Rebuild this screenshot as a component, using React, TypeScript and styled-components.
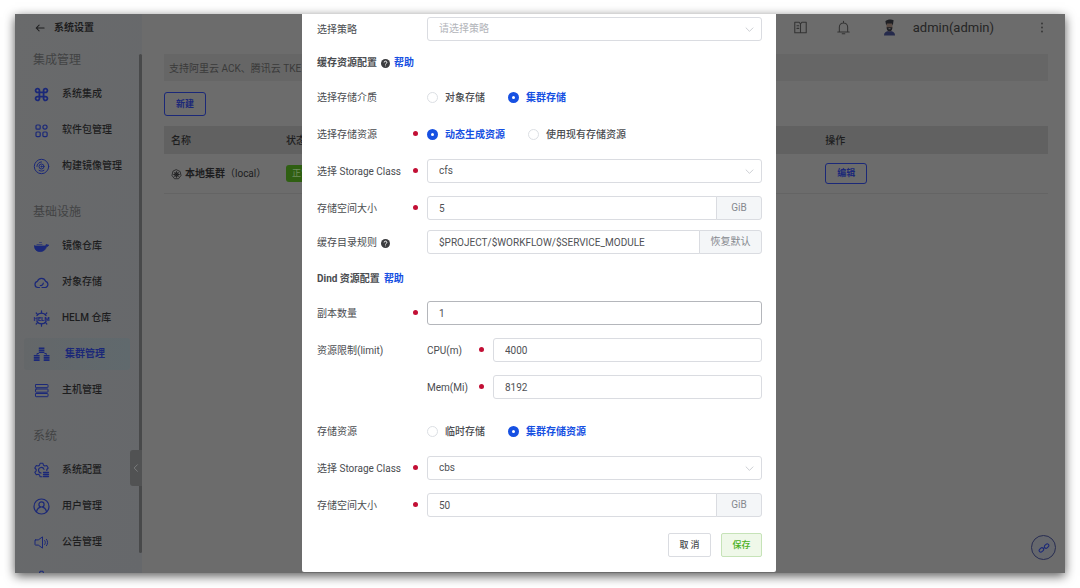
import React from 'react';
import styled, { createGlobalStyle, css } from 'styled-components';

const blue = '#1650e2';
const dimBlue = '#1b2878';

const GlobalStyle = createGlobalStyle`
  *, *::before, *::after { box-sizing: border-box; }
  body {
    margin: 0;
    background: #fff;
    color: #4a4c50;
    font: 10px/16px Roboto, "Noto Sans CJK SC", sans-serif;
  }
  button, input, select { font: inherit; color: inherit; margin: 0; }
  h1, h2, h3, p, ul { margin: 0; padding: 0; }
  ul { list-style: none; }
  svg { display: block; flex: none; }
`;

const Page = styled.div`
  padding: 14px 15px 15px;
`;

const Frame = styled.div`
  display: grid;
  grid-template-columns: minmax(0, 1fr);
  min-height: calc(100vh - 29px);
  background: #6c6c6c;
  box-shadow: 0 3px 10px rgba(0, 0, 0, 0.65);
`;

const Shell = styled.div`
  grid-area: 1 / 1;
  contain: size;
  position: relative;
  display: flex;
  overflow: hidden;
  color: #1d1d1e;
`;

/* ---------- sidebar ---------- */

const Sidebar = styled.aside`
  position: relative;
  flex: none;
  width: 127px;
  background: linear-gradient(100deg, #696a6b, #66686b);
`;

const Back = styled.a`
  display: flex;
  align-items: center;
  gap: 9px;
  height: 28px;
  padding-left: 20px;
  color: #1d1d1e;
  font-weight: 700;
  text-decoration: none;
`;

const Group = styled.section`
  & + & { margin-top: 10px; }
`;

const GroupTitle = styled.h2`
  padding: 8px 18px 6px;
  color: #424344;
  font-size: 12px;
  line-height: 20px;
  font-weight: 400;
`;

const NavLink = styled.a<{ $active?: boolean }>`
  display: flex;
  align-items: center;
  gap: 12px;
  height: 36px;
  padding-left: 18px;
  color: #1d1d1e;
  font-weight: 500;
  text-decoration: none;
  svg { color: ${dimBlue}; }
  ${(p) =>
    p.$active &&
    css`
      height: 32px;
      margin: 2px 12px 2px 9px;
      padding-left: 9px;
      gap: 15px;
      color: ${dimBlue};
      font-weight: 700;
      border-radius: 3px;
      background: linear-gradient(90deg, #646769, #60696d);
    `}
`;

const ScrollThumb = styled.div`
  position: absolute;
  top: 40px;
  right: 0;
  bottom: 20px;
  width: 3px;
  border-radius: 2px;
  background: #48494a;
`;

const Collapse = styled.button`
  position: absolute;
  top: 436px;
  right: 0;
  display: flex;
  align-items: center;
  justify-content: center;
  width: 12px;
  height: 36px;
  padding: 0;
  border: 0;
  border-radius: 3px 0 0 3px;
  background: #515253;
  color: #7c7d7e;
`;

/* ---------- main column ---------- */

const Main = styled.main`
  flex: 1;
  min-width: 0;
  padding: 0 17px 0 22px;
`;

const TopBar = styled.header`
  display: flex;
  align-items: center;
  justify-content: flex-end;
  height: 27px;
  margin-bottom: 13px;
`;

const Tools = styled.div`
  display: flex;
  gap: 28px;
  margin-right: 32px;
`;

const IconButton = styled.button`
  padding: 0;
  border: 0;
  background: none;
  color: #333;
`;

const UserName = styled.span`
  margin: 0 46px 0 17px;
  font-size: 13px;
  color: #252525;
`;

const MoreButton = styled(IconButton)`
  margin-right: 4px;
`;

const Notice = styled.p`
  height: 27px;
  margin-bottom: 11px;
  padding-left: 5px;
  overflow: hidden;
  background: #666;
  color: #3a3a3a;
  line-height: 30px;
`;

const OutlineButton = styled.button<{ $tall?: boolean }>`
  display: block;
  width: 42px;
  height: ${(p) => (p.$tall ? 24 : 21)}px;
  padding: 0;
  border: 1px solid ${dimBlue};
  border-radius: 3px;
  background: transparent;
  color: ${dimBlue};
  font-size: 9px;
  line-height: 12px;
  font-weight: 700;
`;

const Table = styled.table`
  width: 100%;
  margin-top: 10px;
  border-collapse: collapse;
  table-layout: fixed;
  text-align: left;
  th {
    height: 28px;
    padding: 2px 7px 0;
    background: #616161;
    font-weight: 500;
  }
  th:first-child { width: 13%; }
  th:nth-child(2) { width: 61%; }
  td {
    height: 39px;
    padding: 0 7px;
    border-bottom: 1px solid #646464;
  }
`;

const ClusterName = styled.span`
  display: flex;
  align-items: center;
  gap: 3px;
  padding-top: 2px;
  font-weight: 700;
  white-space: nowrap;
`;

const Latin = styled.span`
  font-weight: 400;
`;

const StatusTag = styled.span`
  display: inline-block;
  padding: 0 6px;
  border-radius: 3px;
  background: #2f5f12;
  color: #6f8d5e;
  font-size: 9px;
  line-height: 17px;
`;

const FloatLink = styled.a`
  position: absolute;
  right: 9px;
  bottom: 13px;
  display: flex;
  align-items: center;
  justify-content: center;
  width: 25px;
  height: 25px;
  border: 1px solid #282d52;
  border-radius: 50%;
  background: #66686d;
  color: ${dimBlue};
`;

/* ---------- dialog ---------- */

const Layer = styled.div`
  grid-area: 1 / 1;
  position: relative;
  display: flex;
  justify-content: center;
  padding: 0 2px 1px 0;
  pointer-events: none;
`;

const Dialog = styled.form`
  width: 474px;
  max-width: 100%;
  padding: 3px 14px 15px 15px;
  border-radius: 0 0 2px 2px;
  background: #fff;
  pointer-events: auto;
`;

const Row = styled.div<{ $gap?: number; $label?: number }>`
  display: grid;
  grid-template-columns: ${(p) => p.$label ?? 110}px minmax(0, 1fr);
  align-items: center;
  min-height: 24px;
  margin-top: ${(p) => p.$gap ?? 13}px;
`;

const TopRow = styled(Row)`
  align-items: start;
`;

const Label = styled.label<{ $required?: boolean }>`
  display: flex;
  align-items: center;
  gap: 4px;
  padding-top: 2px;
  line-height: 22px;
  white-space: nowrap;
  ${(p) =>
    p.$required &&
    css`
      &::after {
        content: '';
        width: 5px;
        height: 5px;
        margin: 0 9px 4px auto;
        border-radius: 50%;
        background: #c20f35;
      }
    `}
`;

const Heading = styled.h3<{ $gap: number }>`
  display: flex;
  align-items: center;
  gap: 4px;
  height: 22px;
  margin-top: ${(p) => p.$gap}px;
  padding-top: 2px;
  font-size: 10px;
  line-height: 16px;
  font-weight: 700;
  a { color: ${blue}; text-decoration: none; }
`;

const control = css`
  display: block;
  width: 100%;
  height: 24px;
  padding: 0 11px;
  border: 1px solid #dadce1;
  border-radius: 3px;
  outline: 0;
  background: #fff;
  color: #4f5155;
`;

const Input = styled.input<{ $hover?: boolean }>`
  ${control}
  ${(p) => p.$hover && css`border-color: #b4b6bb;`}
`;

const SelectBox = styled.div`
  display: grid;
  align-items: center;
  svg {
    grid-area: 1 / 1;
    justify-self: end;
    margin-right: 8px;
    color: #c0c3c9;
    pointer-events: none;
  }
`;

const Select = styled.select<{ $empty?: boolean }>`
  ${control}
  grid-area: 1 / 1;
  appearance: none;
  ${(p) => p.$empty && css`color: #b3b5ba;`}
`;

const Joined = styled.div`
  display: flex;
  ${Input} { flex: 1; min-width: 0; border-radius: 3px 0 0 3px; }
`;

const addon = css`
  flex: none;
  height: 24px;
  margin-left: -1px;
  padding: 0;
  border: 1px solid #dadce1;
  border-radius: 0 3px 3px 0;
  background: #f4f6f8;
  color: #85888e;
  text-align: center;
`;

const Unit = styled.span`
  ${addon}
  width: 46px;
  line-height: 22px;
`;

const ResetButton = styled.button`
  ${addon}
  width: 63px;
`;

const Radios = styled.div`
  display: flex;
  gap: 23px;
`;

const RadioLabel = styled.label`
  display: flex;
  align-items: center;
  gap: 7px;
  padding-top: 2px;
  font-weight: 500;
  &:has(input:checked) { color: ${blue}; font-weight: 700; }
`;

const RadioInput = styled.input`
  appearance: none;
  width: 11px;
  height: 11px;
  border: 1px solid #dcdfe4;
  border-radius: 50%;
  background: #fff;
  ${RadioLabel} & { margin: 0 0 2px; }
  &:checked { border: 4px solid ${blue}; }
`;

const Footer = styled.footer`
  display: flex;
  justify-content: flex-end;
  gap: 10px;
  margin-top: 16px;
`;

const ActionButton = styled.button<{ $primary?: boolean }>`
  width: ${(p) => (p.$primary ? 41 : 43)}px;
  height: 24px;
  padding: 0;
  border: 1px solid ${(p) => (p.$primary ? '#c6e3b8' : '#dadce1')};
  border-radius: 2px;
  background: ${(p) => (p.$primary ? '#eff8e9' : '#fff')};
  color: ${(p) => (p.$primary ? '#4db11f' : '#4a4c50')};
  font-size: 9px;
  line-height: 12px;
  font-weight: 500;
`;

/* ---------- icons ---------- */

const Svg = ({ size = 17, w = 1.2, children }: { size?: number; w?: number; children: React.ReactNode }) => (
  <svg width={size} height={size} viewBox="0 0 17 17" fill="none" stroke="currentColor" strokeWidth={w} strokeLinecap="round" strokeLinejoin="round" aria-hidden="true">
    {children}
  </svg>
);

const CommandIcon = () => (
  <Svg w={1.8}>
    <path d="M6.4 6.4V4.6a1.9 1.9 0 1 0-1.9 1.8h8a1.9 1.9 0 1 0-1.9-1.8v7.8a1.9 1.9 0 1 0 1.9-1.8h-8a1.9 1.9 0 1 0 1.9 1.8z" />
  </Svg>
);
const PackageIcon = () => (
  <Svg>
    <rect x="3" y="3" width="4.2" height="4.2" rx="1" />
    <circle cx="12" cy="5.1" r="2.1" />
    <rect x="3" y="10" width="4.2" height="4.6" rx="1" />
    <rect x="9.9" y="10" width="4.2" height="4.6" rx="1" />
  </Svg>
);
const DiscIcon = () => (
  <Svg w={1}>
    <circle cx="8.5" cy="8.5" r="7.2" />
    <path d="M3.9 8.5a4.6 4.6 0 0 1 4.6-4.6M6 12.400c1.500.9 3.500.9 5 0" />
    <circle cx="8.500" cy="8.500" r="2.500" />
    <circle cx="8.500" cy="8.500" r="0.600" />
  </Svg>
);
const WhaleIcon = () => (
  <Svg w={0.8}>
    <path d="M1.5 8h10.3c.8 0 1.2-.6 1.3-1.5.9.2 1.6.6 2.6.5-.3 1-1.2 1.5-2.2 1.6-.8 3-3 5-6.4 5C3.700 13.600 1.500 11.600 1.500 8z" fill="currentColor" />
    <path d="M4 6.500h5M6.500 4.500h2" strokeWidth="1" opacity="0.6" />
  </Svg>
);
const CloudIcon = () => (
  <Svg>
    <path d="M6.500 13.500H4.800A3.100 3.100 0 0 1 4.400 7.400 4.300 4.300 0 0 1 12.600 7.300 3.200 3.200 0 0 1 12.400 13.500H9M7.300 11.500c1.700.2 2.700-.8 3-2.300" />
  </Svg>
);
const HelmIcon = () => (
  <Svg w={1.2}>
    <path d="M3.900 5.600a5.400 5.400 0 0 1 9.200 0M3.900 11.400a5.400 5.400 0 0 0 9.200 0" />
    <path d="M8.500 3V.8M4.700 4.600L3.200 3M12.300 4.600L13.800 3M8.500 14v2.200M4.700 12.400L3.200 14M12.300 12.400l1.500 1.600" />
    <text x="8.500" y="10.600" fill="currentColor" stroke="none" fontSize="6" fontWeight="900" textAnchor="middle">HELM</text>
  </Svg>
);
const ClusterIcon = () => (
  <Svg>
    <path
      d="M5.800 1.500h5.600v1.600H5.800zM5.800 3.600h5.600v1.600H5.800zM5.800 5.700h5.600v1.300H5.800zM.8 9h5.800v1.600H.8zM.8 11.100h5.800v1.600H.8zM.8 13.200h5.800v1.800H.8zM10.700 9h5.800v1.600h-5.800zM10.700 11.100h5.800v1.600h-5.800zM10.700 13.200h5.800v1.800h-5.800z"
      fill="currentColor"
      stroke="none"
    />
    <path d="M4 8.500v-1h1.500M13.300 8.500v-1h-1.500" strokeWidth="1" />
  </Svg>
);
const ServerIcon = () => (
  <Svg w={1}>
    <rect x="2.500" y="2.500" width="12.500" height="3.200" rx="0.600" />
    <rect x="2.500" y="7" width="12.500" height="3.200" rx="0.600" />
    <rect x="2.500" y="11.500" width="12.500" height="3.200" rx="0.600" />
  </Svg>
);
const GearIcon = () => (
  <Svg w={1.1}>
    <path d="M9 14.800H7.100l-.6-1.900-1.300-.7-1.900.5-1.500-2.400 1.400-1.500V7.500L1.800 6l1.500-2.500 1.900.5 1.300-.8.600-1.900h2.800l.6 1.900 1.300.8 1.900-.5L15.200 6l-1.400 1.500v1" />
    <path d="M11 7.400A2.800 2.800 0 1 0 8.200 11" />
    <path d="M10.500 10.500h5M10.500 12.500h5M10.500 14.500h5" strokeWidth="1.300" />
  </Svg>
);
const UserIcon = () => (
  <Svg>
    <circle cx="8.500" cy="8.500" r="7.500" />
    <circle cx="8.500" cy="6.400" r="2.600" />
    <path d="M3.500 13.600c.6-2.800 2.300-4 3.700-4.500M13.500 13.600c-.6-2.800-2.300-4-3.700-4.500" />
  </Svg>
);
const SpeakerIcon = () => (
  <Svg w={1}>
    <path d="M2.500 5.900h2.800l4.200-3v11.200l-4.200-3H2.500a.5.500 0 0 1-.5-.5V6.400a.5.500 0 0 1 .5-.5zM11.700 6.500c.9 1.200.9 2.800 0 4M13.500 5.300c1.500 2 1.500 4.400 0 6.400" />
  </Svg>
);
const ArrowLeft = () => (
  <Svg size={10} w={1.700}>
    <path d="M15.500 8.500H2M7 3.500l-5 5 5 5" />
  </Svg>
);
const Chevron = () => (
  <Svg size={9} w={1.500}>
    <path d="M2 5.500l6.500 6.500 6.500-6.500" />
  </Svg>
);
const ChevronLeft = () => (
  <Svg size={8} w={2}>
    <path d="M11.500 1.500l-7 7 7 7" />
  </Svg>
);
const BookIcon = () => (
  <Svg size={15} w={1.200}>
    <path d="M8.500 4.500v10H2v-12h5l1.500 2M8.500 4.500l1.500-2h5v12H8.500M4.500 6.500h2M4.500 9.500h2" />
  </Svg>
);
const BellIcon = () => (
  <Svg size={15} w={1.200}>
    <path d="M2 13.500h13M3.800 13.500V8a4.700 4.700 0 0 1 9.400 0v5.500M8.500 3.300V1.500M7 15.500h3" />
  </Svg>
);
const AvatarIcon = () => (
  <svg width="13" height="17" viewBox="0 0 13 17" aria-hidden="true">
    <path d="M1 16.500c0-3 1.800-4.500 5.500-4.500s5.500 1.500 5.500 4.500z" fill="#252a4c" />
    <path d="M3.600 4h5.800v4.500c0 2.300-1.200 4-2.900 4s-2.900-1.700-2.900-4z" fill="#5a4c45" />
    <path d="M3.200 6.500L2.400 2.200C4 .4 8.500.2 10.600 1.200l-.8 5.300-.9-2H4zM3.700 8.300h5.600c0 2.500-1 4-2.800 4s-2.800-1.500-2.800-4z" fill="#1e1f24" />
    <path d="M5.500 9.700h2" stroke="#777" strokeWidth="0.800" />
  </svg>
);
const DotsIcon = () => (
  <svg width="4" height="11" viewBox="0 0 4 11" fill="currentColor" aria-hidden="true">
    <circle cx="2" cy="1.500" r="0.900" />
    <circle cx="2" cy="5.500" r="0.900" />
    <circle cx="2" cy="9.500" r="0.900" />
  </svg>
);
const KubeIcon = () => (
  <Svg size={11} w={1.200}>
    <path d="M8.500 1.200l5.600 2.700 1.400 6.100-3.900 5H5.400l-3.900-5 1.400-6.100z" />
    <circle cx="8.500" cy="8.500" r="3" />
    <path d="M8.500 4v9M4 8.500h9M5.500 5.500l6 6M11.500 5.500l-6 6" />
  </Svg>
);
const LinkIcon = () => (
  <Svg size={12} w={1.500}>
    <rect x="1.300" y="9" width="7" height="4.600" rx="2.300" transform="rotate(-45 4.800 11.300)" />
    <rect x="8.700" y="3.400" width="7" height="4.600" rx="2.300" transform="rotate(-45 12.200 5.700)" />
    <path d="M7.500 9.500l2-2" />
  </Svg>
);
const HelpIcon = () => (
  <svg width="9" height="9" viewBox="0 0 18 18" role="img" aria-label="说明">
    <circle cx="9" cy="9" r="9" fill="#3c3d40" />
    <path d="M6.300 7a2.700 2.700 0 1 1 4 2.300c-.9.500-1.300.9-1.300 1.900M9 13.200v1.300" fill="none" stroke="#fff" strokeWidth="1.800" />
  </svg>
);

/* ---------- data ---------- */

const groups = [
  {
    title: '集成管理',
    items: [
      { text: '系统集成', icon: <CommandIcon /> },
      { text: '软件包管理', icon: <PackageIcon /> },
      { text: '构建镜像管理', icon: <DiscIcon /> },
    ],
  },
  {
    title: '基础设施',
    items: [
      { text: '镜像仓库', icon: <WhaleIcon /> },
      { text: '对象存储', icon: <CloudIcon /> },
      { text: 'HELM 仓库', icon: <HelmIcon /> },
      { text: '集群管理', icon: <ClusterIcon />, active: true },
      { text: '主机管理', icon: <ServerIcon /> },
    ],
  },
  {
    title: '系统',
    items: [
      { text: '系统配置', icon: <GearIcon /> },
      { text: '用户管理', icon: <UserIcon /> },
      { text: '公告管理', icon: <SpeakerIcon /> },
      { text: '', icon: <GearIcon /> },
    ],
  },
];

/* ---------- form parts ---------- */

const SelectField = ({ id, value, empty }: { id: string; value: string; empty?: boolean }) => (
  <SelectBox>
    <Select id={id} $empty={empty}>
      <option>{value}</option>
    </Select>
    <Chevron />
  </SelectBox>
);

const RadioField = ({ name, options, checked }: { name: string; options: string[]; checked: number }) => (
  <Radios role="radiogroup">
    {options.map((o, i) => (
      <RadioLabel key={o}>
        <RadioInput type="radio" name={name} defaultChecked={i === checked} />
        {o}
      </RadioLabel>
    ))}
  </Radios>
);

const SizeField = ({ id, value }: { id: string; value: string }) => (
  <Joined>
    <Input id={id} defaultValue={value} />
    <Unit>GiB</Unit>
  </Joined>
);

export default function App() {
  return (
    <Page>
      <GlobalStyle />
      <Frame>
        <Shell>
          <Sidebar>
            <Back href="#back">
              <ArrowLeft />
              系统设置
            </Back>
            <nav>
              {groups.map((g) => (
                <Group key={g.title}>
                  <GroupTitle>{g.title}</GroupTitle>
                  {g.items.map((it) => (
                    <NavLink key={it.text} href="#nav" $active={'active' in it}>
                      {it.icon}
                      {it.text}
                    </NavLink>
                  ))}
                </Group>
              ))}
            </nav>
            <ScrollThumb />
            <Collapse type="button" aria-label="收起">
              <ChevronLeft />
            </Collapse>
          </Sidebar>
          <Main>
            <TopBar>
              <Tools>
                <IconButton type="button" aria-label="文档"><BookIcon /></IconButton>
                <IconButton type="button" aria-label="通知"><BellIcon /></IconButton>
              </Tools>
              <AvatarIcon />
              <UserName>admin(admin)</UserName>
              <MoreButton type="button" aria-label="更多"><DotsIcon /></MoreButton>
            </TopBar>
            <Notice>支持阿里云 ACK、腾讯云 TKE</Notice>
            <OutlineButton type="button" $tall>新建</OutlineButton>
            <Table>
              <thead>
                <tr>
                  <th>名称</th>
                  <th>状态</th>
                  <th>操作</th>
                </tr>
              </thead>
              <tbody>
                <tr>
                  <td>
                    <ClusterName>
                      <KubeIcon />
                      <span>本地集群<Latin>（local）</Latin></span>
                    </ClusterName>
                  </td>
                  <td><StatusTag>正常</StatusTag></td>
                  <td><OutlineButton type="button">编辑</OutlineButton></td>
                </tr>
              </tbody>
            </Table>
          </Main>
          <FloatLink href="#link" aria-label="链接"><LinkIcon /></FloatLink>
        </Shell>

        <Layer>
          <Dialog role="dialog" onSubmit={(e) => e.preventDefault()}>
            <Row $gap={0}>
              <Label htmlFor="strategy">选择策略</Label>
              <SelectField id="strategy" value="请选择策略" empty />
            </Row>

            <Heading $gap={10}>
              缓存资源配置 <HelpIcon /> <a href="#help">帮助</a>
            </Heading>
            <Row $gap={12}>
              <Label as="span">选择存储介质</Label>
              <RadioField name="medium" options={['对象存储', '集群存储']} checked={1} />
            </Row>
            <Row>
              <Label as="span" $required>选择存储资源</Label>
              <RadioField name="resource" options={['动态生成资源', '使用现有存储资源']} checked={0} />
            </Row>
            <Row>
              <Label htmlFor="class" $required>选择 Storage Class</Label>
              <SelectField id="class" value="cfs" />
            </Row>
            <Row>
              <Label htmlFor="size" $required>存储空间大小</Label>
              <SizeField id="size" value="5" />
            </Row>
            <Row $gap={10}>
              <Label htmlFor="dir">缓存目录规则 <HelpIcon /></Label>
              <Joined>
                <Input id="dir" defaultValue="$PROJECT/$WORKFLOW/$SERVICE_MODULE" />
                <ResetButton type="button">恢复默认</ResetButton>
              </Joined>
            </Row>

            <Heading $gap={13}>
              Dind 资源配置 <a href="#help">帮助</a>
            </Heading>
            <Row $gap={12}>
              <Label htmlFor="replicas" $required>副本数量</Label>
              <Input id="replicas" defaultValue="1" $hover />
            </Row>
            <TopRow>
              <Label as="span">资源限制(limit)</Label>
              <div>
                <Row $gap={0} $label={66}>
                  <Label htmlFor="cpu" $required>CPU(m)</Label>
                  <Input id="cpu" defaultValue="4000" />
                </Row>
                <Row $label={66}>
                  <Label htmlFor="mem" $required>Mem(Mi)</Label>
                  <Input id="mem" defaultValue="8192" />
                </Row>
              </div>
            </TopRow>
            <Row $gap={20}>
              <Label as="span">存储资源</Label>
              <RadioField name="dind" options={['临时存储', '集群存储资源']} checked={1} />
            </Row>
            <Row>
              <Label htmlFor="dindClass" $required>选择 Storage Class</Label>
              <SelectField id="dindClass" value="cbs" />
            </Row>
            <Row>
              <Label htmlFor="dindSize" $required>存储空间大小</Label>
              <SizeField id="dindSize" value="50" />
            </Row>
            <Footer>
              <ActionButton type="button">取 消</ActionButton>
              <ActionButton type="submit" $primary>保存</ActionButton>
            </Footer>
          </Dialog>
        </Layer>
      </Frame>
    </Page>
  );
}
